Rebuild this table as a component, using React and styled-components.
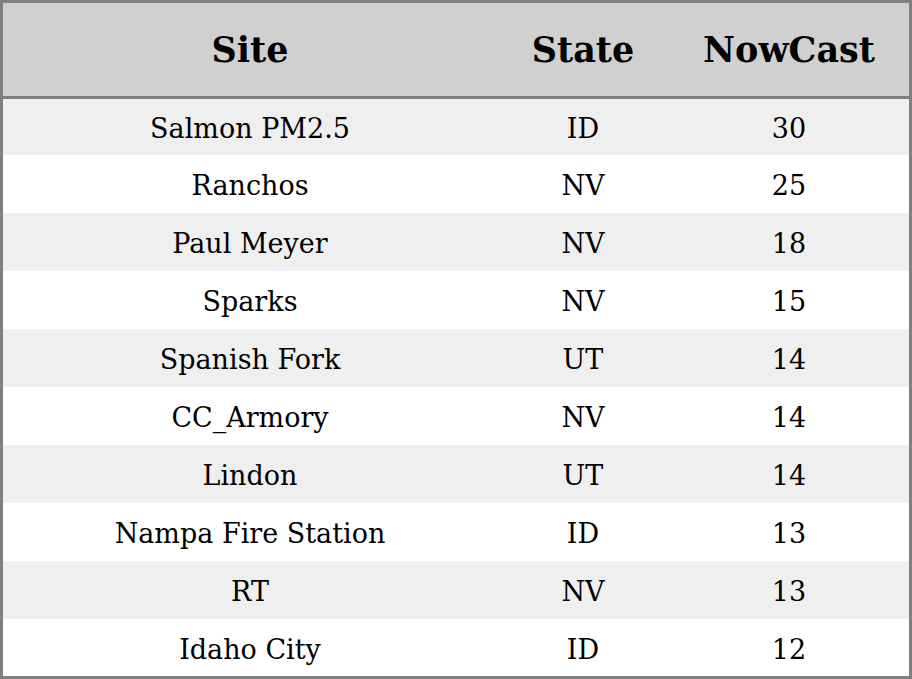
import styled, {createGlobalStyle} from 'styled-components';

const GlobalStyle = createGlobalStyle`
  html, body {
    margin: 0;
    padding: 0;
    background: #fff;
  }
`;

const Table = styled.table`
  width: 912px;
  box-sizing: border-box;
  border-collapse: collapse;
  border: 3px solid #808080;
  font-family: 'DejaVu Serif', serif;
  color: #000;
  table-layout: fixed;
`;

const Head = styled.th`
  background: #d0d0d0;
  height: 93px;
  padding: 0;
  font-size: 35px;
  font-weight: bold;
  text-align: center;
  border-bottom: 3px solid #808080;
  width: ${(p) => p.$w}px;
`;

const Row = styled.tr`
  height: ${(p) => p.$h}px;
  background: ${(p) => (p.$odd ? '#efefef' : '#fff')};
`;

const Cell = styled.td`
  padding: 4px 0 0;
  font-size: 27px;
  text-align: center;
  vertical-align: middle;
`;

const rows = [
  ['Salmon PM2.5', 'ID', 30],
  ['Ranchos', 'NV', 25],
  ['Paul Meyer', 'NV', 18],
  ['Sparks', 'NV', 15],
  ['Spanish Fork', 'UT', 14],
  ['CC_Armory', 'NV', 14],
  ['Lindon', 'UT', 14],
  ['Nampa Fire Station', 'ID', 13],
  ['RT', 'NV', 13],
  ['Idaho City', 'ID', 12],
];

export default function App() {
  return (
    <>
      <GlobalStyle />
      <Table>
        <thead>
          <tr>
            <Head $w={494}>Site</Head>
            <Head $w={172}>State</Head>
            <Head $w={240}>NowCast</Head>
          </tr>
        </thead>
        <tbody>
          {rows.map(([site, state, now], i) => (
            <Row
              key={site}
              $odd={i % 2 === 0}
              $h={i === 0 ? 57 : i === rows.length - 1 ? 59 : 58}
            >
              <Cell>{site}</Cell>
              <Cell>{state}</Cell>
              <Cell>{now}</Cell>
            </Row>
          ))}
        </tbody>
      </Table>
    </>
  );
}
